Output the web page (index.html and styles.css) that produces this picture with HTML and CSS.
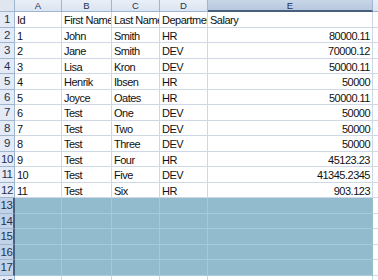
FILE: index.html
```html
<!DOCTYPE html>
<html>
<head>
<meta charset="utf-8">
<link rel="stylesheet" href="styles.css">
</head>
<body>
<div class="sheet">
  <div class="corner"></div>
  <div class="ch">A</div><div class="ch">B</div><div class="ch">C</div><div class="ch">D</div><div class="ch sel">E</div><div class="ch last"></div>

  <div class="rh">1</div><div class="c">Id</div><div class="c">First Name</div><div class="c">Last Name</div><div class="c">Department</div><div class="c">Salary</div><div class="c f"></div>
  <div class="rh">2</div><div class="c">1</div><div class="c">John</div><div class="c">Smith</div><div class="c">HR</div><div class="c n">80000.11</div><div class="c f"></div>
  <div class="rh">3</div><div class="c">2</div><div class="c">Jane</div><div class="c">Smith</div><div class="c">DEV</div><div class="c n">70000.12</div><div class="c f"></div>
  <div class="rh">4</div><div class="c">3</div><div class="c">Lisa</div><div class="c">Kron</div><div class="c">DEV</div><div class="c n">50000.11</div><div class="c f"></div>
  <div class="rh">5</div><div class="c">4</div><div class="c">Henrik</div><div class="c">Ibsen</div><div class="c">HR</div><div class="c n">50000</div><div class="c f"></div>
  <div class="rh">6</div><div class="c">5</div><div class="c">Joyce</div><div class="c">Oates</div><div class="c">HR</div><div class="c n">50000.11</div><div class="c f"></div>
  <div class="rh">7</div><div class="c">6</div><div class="c">Test</div><div class="c">One</div><div class="c">DEV</div><div class="c n">50000</div><div class="c f"></div>
  <div class="rh">8</div><div class="c">7</div><div class="c">Test</div><div class="c">Two</div><div class="c">DEV</div><div class="c n">50000</div><div class="c f"></div>
  <div class="rh">9</div><div class="c">8</div><div class="c">Test</div><div class="c">Three</div><div class="c">DEV</div><div class="c n">50000</div><div class="c f"></div>
  <div class="rh">10</div><div class="c">9</div><div class="c">Test</div><div class="c">Four</div><div class="c">HR</div><div class="c n">45123.23</div><div class="c f"></div>
  <div class="rh">11</div><div class="c">10</div><div class="c">Test</div><div class="c">Five</div><div class="c">DEV</div><div class="c n">41345.2345</div><div class="c f"></div>
  <div class="rh">12</div><div class="c">11</div><div class="c">Test</div><div class="c">Six</div><div class="c">HR</div><div class="c n">903.123</div><div class="c f"></div>

  <div class="rh sr">13</div><div class="c s"></div><div class="c s"></div><div class="c s"></div><div class="c s"></div><div class="c s se"></div><div class="c f"></div>
  <div class="rh sr">14</div><div class="c s"></div><div class="c s"></div><div class="c s"></div><div class="c s"></div><div class="c s se"></div><div class="c f"></div>
  <div class="rh sr">15</div><div class="c s"></div><div class="c s"></div><div class="c s"></div><div class="c s"></div><div class="c s se"></div><div class="c f"></div>
  <div class="rh sr">16</div><div class="c s"></div><div class="c s"></div><div class="c s"></div><div class="c s"></div><div class="c s se"></div><div class="c f"></div>
  <div class="rh sr">17</div><div class="c s"></div><div class="c s"></div><div class="c s"></div><div class="c s"></div><div class="c s se"></div><div class="c f"></div>
  <div class="rh">18</div><div class="c"></div><div class="c"></div><div class="c"></div><div class="c"></div><div class="c"></div><div class="c f"></div>
</div>
</body>
</html>
```
FILE: styles.css
```css
html, body {
  margin: 0;
  padding: 0;
  background: #ffffff;
  overflow: hidden;
}
.sheet {
  display: grid;
  grid-template-columns: 15px 47px 50px 48px 48px 165px 5px;
  grid-template-rows: 12px;
  grid-auto-rows: 15.5px;
  width: 378px;
  font-family: "Liberation Sans", Arial, sans-serif;
  font-size: 11px;
  letter-spacing: -0.5px;
  color: #111;
}
.corner {
  background: #dfe6f0;
  border-right: 1px solid #9eb6ce;
  border-bottom: 1px solid #9eb6ce;
  box-sizing: border-box;
}
.ch {
  box-sizing: border-box;
  background: linear-gradient(#e9eff8, #dbe4f1);
  border-right: 1px solid #9eb6ce;
  border-bottom: 1px solid #9eb6ce;
  text-align: center;
  font-size: 9.5px;
  letter-spacing: 0;
  line-height: 11px;
  color: #1f3350;
}
.ch.sel {
  background: linear-gradient(#c9d6e8, #b7c7de);
  border-bottom: 2px solid #48607e;
}
.ch.last {
  border-right: none;
}
.rh {
  box-sizing: border-box;
  background: #e4ebf6;
  border-right: 1px solid #9eb6ce;
  border-bottom: 1px solid #9eb6ce;
  text-align: center;
  font-size: 11.5px;
  letter-spacing: -0.4px;
  line-height: 15px;
  color: #1f3350;
}
.rh.sr {
  background: #c2d2e8;
  border-right: 2px solid #48607e;
}
.c {
  box-sizing: border-box;
  border-right: 1px solid #d0d7e5;
  border-bottom: 1px solid #d0d7e5;
  padding: 1px 0 0 2px;
  line-height: 15px;
  white-space: nowrap;
  overflow: hidden;
}
.c.n {
  text-align: right;
  padding-right: 2px;
}
.c.s {
  background: #92bccd;
  border-right-color: #a6c9d6;
  border-bottom-color: #a9ccd9;
}
.c.s.se {
  border-right-color: #9cbfcc;
}
.c.f {
  border-right: none;
}
```
